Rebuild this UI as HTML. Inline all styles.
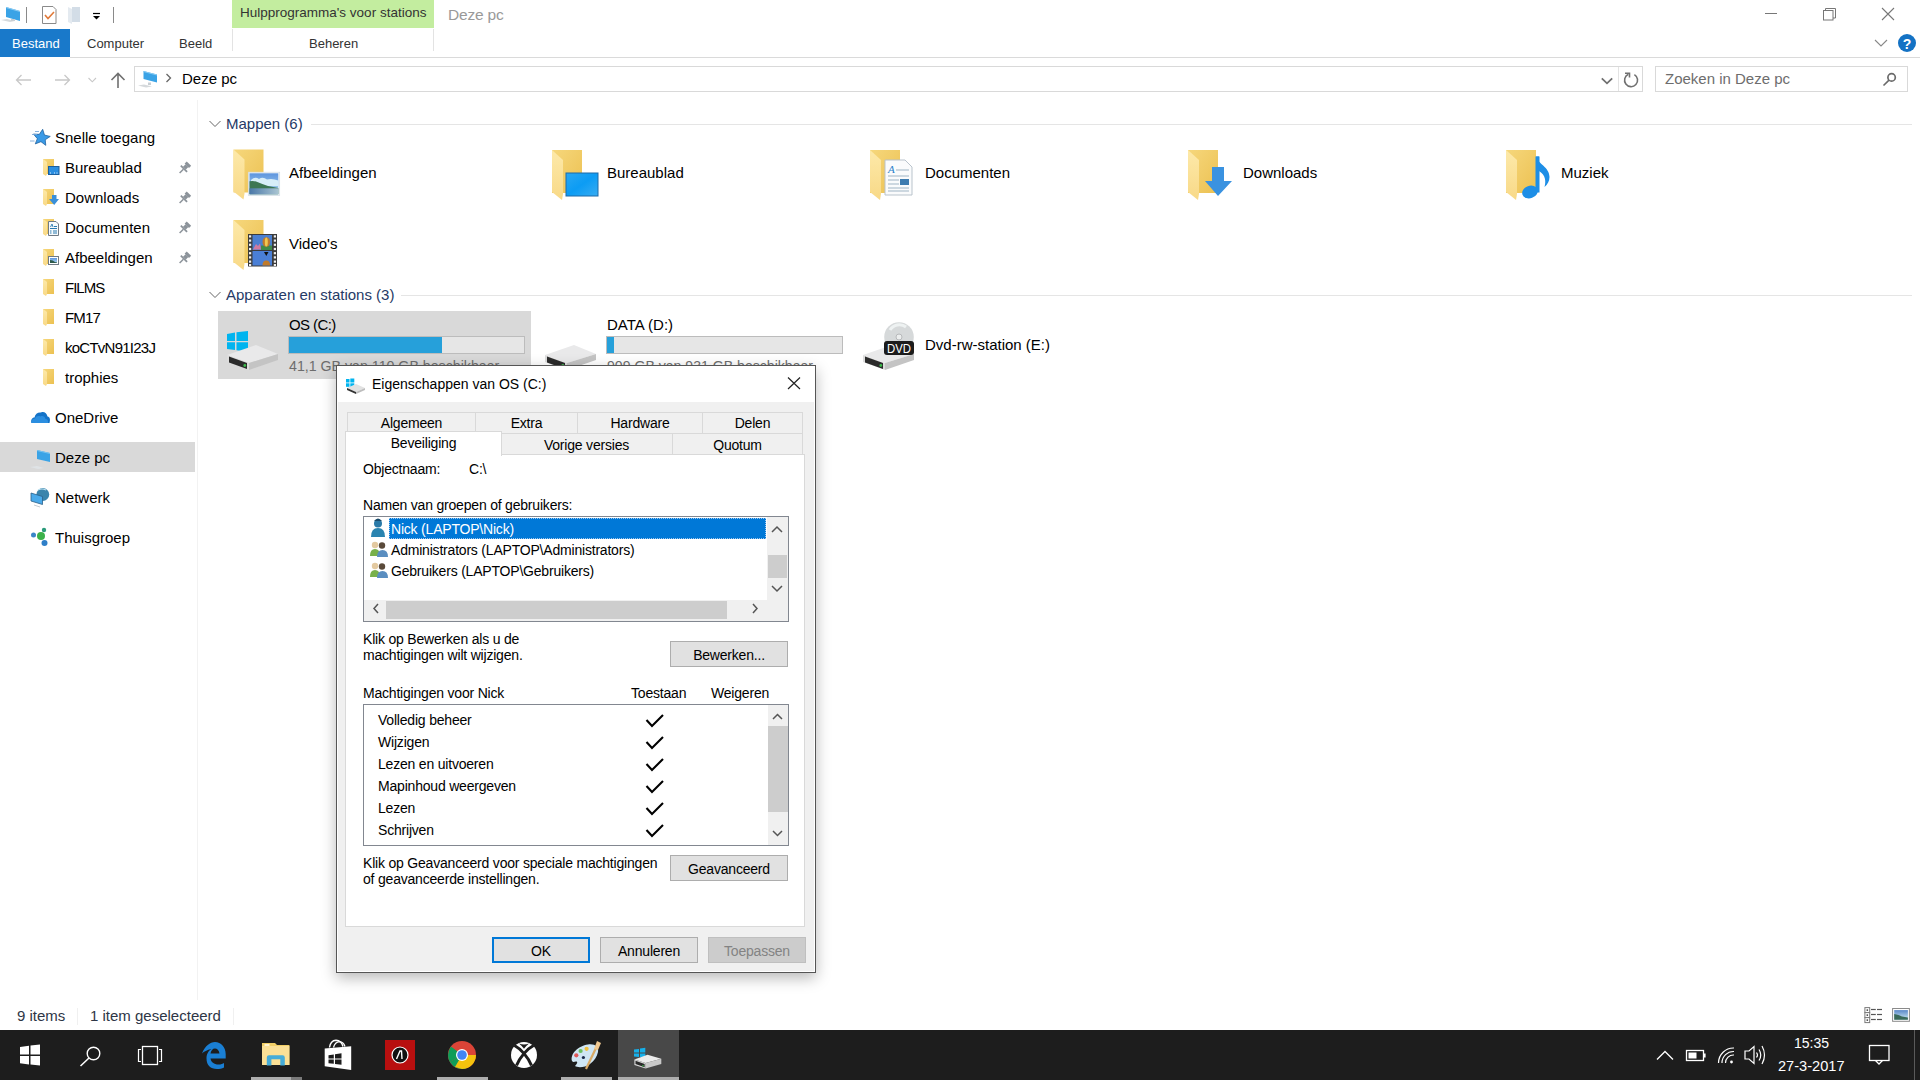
<!DOCTYPE html>
<html><head><meta charset="utf-8">
<style>
*{margin:0;padding:0;box-sizing:border-box}
html,body{width:1920px;height:1080px;overflow:hidden;background:#fff;font-family:"Liberation Sans",sans-serif;color:#000}
.a{position:absolute}
.t{position:absolute;white-space:nowrap;line-height:1}
svg{position:absolute;overflow:visible}
.d{font-size:14px;letter-spacing:-0.2px;color:#000}
.tab{background:#f0f0f0;border:1px solid #d9d9d9;font-size:14px;letter-spacing:-0.2px;text-align:center}
.tab span{position:relative;top:1.5px;line-height:1;white-space:nowrap}
.btn{background:#e1e1e1;border:1px solid #adadad}
</style></head><body>

<!-- ===== TITLE BAR / RIBBON ===== -->
<div class="a" style="left:232px;top:0;width:202px;height:28px;background:#c3ed9f"></div>
<div class="t" style="left:240px;top:6px;font-size:13.5px;color:#333">Hulpprogramma's voor stations</div>
<div class="t" style="left:448px;top:6.9px;font-size:15.5px;letter-spacing:-0.2px;color:#999">Deze pc</div>
<div class="a" style="left:0;top:29px;width:70px;height:28px;background:#1979ca"></div>
<div class="t" style="left:12px;top:37.3px;font-size:13px;color:#fff">Bestand</div>
<div class="t" style="left:87px;top:37.3px;font-size:13px;color:#333">Computer</div>
<div class="t" style="left:179px;top:37.3px;font-size:13px;color:#333">Beeld</div>
<div class="a" style="left:232px;top:29px;width:1px;height:22px;background:#e3e3e3"></div>
<div class="a" style="left:433px;top:29px;width:1px;height:22px;background:#e3e3e3"></div>
<div class="t" style="left:309px;top:37.3px;font-size:13px;color:#333">Beheren</div>
<div class="a" style="left:70px;top:57px;width:1850px;height:1px;background:#dadada"></div>

<!-- ===== TOP ICONS ===== -->
<svg width="1920" height="100" style="left:0;top:0">
<!-- QAT -->
<polygon points="6,7 20,11 20,21 6,17" fill="#3aa3e6"/><polygon points="6,7 20,11 20,12 6,8" fill="#8cccf3"/>
<path d="M1 20 L10 22 L15 21 L7 19Z" fill="#d5d9dc"/><rect x="11" y="19" width="4" height="2" fill="#c8ced3"/>
<line x1="26.5" y1="7" x2="26.5" y2="23" stroke="#8a8a8a"/>
<path d="M42.5 6.5 H53 L56 9.5 V23.5 H42.5Z" fill="#fff" stroke="#8a8a8a"/>
<polyline points="45,15 48,18.5 54,12" fill="none" stroke="#e07a3a" stroke-width="1.6"/>
<path d="M68 7 H79 V22 H80 V7Z" fill="#d6dfe8"/><polygon points="68,7 72,9 72,24 68,22" fill="#e4eaf0"/><rect x="72" y="7" width="8" height="15" fill="#d3dde7"/>
<line x1="93" y1="13.5" x2="100" y2="13.5" stroke="#000" stroke-width="1.2"/><polygon points="93,16 100,16 96.5,19.5" fill="#000"/>
<line x1="113.5" y1="7" x2="113.5" y2="23" stroke="#8a8a8a"/>
<!-- window controls -->
<line x1="1765" y1="13.5" x2="1777" y2="13.5" stroke="#777" stroke-width="1"/>
<rect x="1823.5" y="10.5" width="9.5" height="9.5" fill="none" stroke="#777"/><polyline points="1825.5,10.5 1825.5,8.5 1835.5,8.5 1835.5,18 1833,18" fill="none" stroke="#777"/>
<path d="M1882 8 L1894 20 M1894 8 L1882 20" stroke="#777" stroke-width="1.1"/>
<polyline points="1875,40 1881,46 1887,40" fill="none" stroke="#888" stroke-width="1.1"/>
<circle cx="1907" cy="43" r="9" fill="#1472c4"/><text x="1907" y="49" text-anchor="middle" font-size="14" font-weight="bold" fill="#fff">?</text>
<!-- nav buttons -->
<path d="M16.5 80 H31 M21.5 75 L16.5 80 L21.5 85" fill="none" stroke="#c8c8c8" stroke-width="1.3"/>
<path d="M55 80 H69.5 M64.5 75 L69.5 80 L64.5 85" fill="none" stroke="#c8c8c8" stroke-width="1.3"/>
<polyline points="88.5,78 92.3,81.8 96,78" fill="none" stroke="#c8c8c8" stroke-width="1.1"/>
<path d="M118 73.5 V88 M111.5 80 L118 73.5 L124.5 80" fill="none" stroke="#707070" stroke-width="1.6"/>
<polygon points="143.5,71 157,74.5 157,82.5 143.5,79" fill="#3aa3e6"/><polygon points="143.5,71 157,74.5 157,75.5 143.5,72" fill="#8cccf3"/>
<path d="M138 85.5 L146 87.6 L152 86.5 L144 84.5Z" fill="#d5d9dc"/><rect x="148" y="82.5" width="3" height="2.5" fill="#c8ced3"/>
<polyline points="166.5,74 170.5,78 166.5,82" fill="none" stroke="#666" stroke-width="1.3"/>
<polyline points="1601.8,78.3 1607,83.3 1612.2,78.3" fill="none" stroke="#707070" stroke-width="1.8"/>
<path d="M1634.4 74.6 A6.5 6.5 0 1 1 1628.3 74.3" fill="none" stroke="#707070" stroke-width="1.6"/><polyline points="1625,73.2 1629.5,73.2 1629.5,77.6" fill="none" stroke="#707070" stroke-width="1.6"/>
<circle cx="1891.6" cy="77.4" r="3.7" fill="none" stroke="#6a6a6a" stroke-width="1.7"/><line x1="1889" y1="80.2" x2="1883.5" y2="85.5" stroke="#6a6a6a" stroke-width="1.7"/>
<!-- section chevrons -->
<polyline points="209.5,121 215,126.5 220.5,121" fill="none" stroke="#666" stroke-width="1"/>
<line x1="197.5" y1="100" x2="197.5" y2="100" stroke="#eee"/>
</svg>
<svg width="1920" height="1080" style="left:0;top:0"><polyline points="209.5,292 215,297.5 220.5,292" fill="none" stroke="#666" stroke-width="1"/><line x1="197.5" y1="100" x2="197.5" y2="1000" stroke="#f2f2f2"/></svg>

<!-- ===== ADDRESS BAR ===== -->
<div class="a" style="left:134px;top:66px;width:1509px;height:26px;border:1px solid #d9d9d9"></div>
<div class="a" style="left:1618px;top:67px;width:1px;height:24px;background:#e3e3e3"></div>
<div class="t" style="left:182px;top:71px;font-size:15px;color:#000">Deze pc</div>
<div class="a" style="left:1655px;top:66px;width:253px;height:26px;border:1px solid #d9d9d9"></div>
<div class="t" style="left:1665px;top:71px;font-size:15px;color:#6d6d6d">Zoeken in Deze pc</div>

<!-- ===== NAV PANE ===== -->
<div class="a" style="left:0;top:442px;width:195px;height:30px;background:#d9d9d9"></div>
<div class="t" style="left:55px;top:130px;font-size:15px">Snelle toegang</div>
<div class="t" style="left:65px;top:160px;font-size:15px">Bureaublad</div>
<div class="t" style="left:65px;top:190px;font-size:15px">Downloads</div>
<div class="t" style="left:65px;top:220px;font-size:15px">Documenten</div>
<div class="t" style="left:65px;top:250px;font-size:15px">Afbeeldingen</div>
<div class="t" style="left:65px;top:280px;font-size:15px;letter-spacing:-1px">FILMS</div>
<div class="t" style="left:65px;top:310px;font-size:15px;letter-spacing:-0.8px">FM17</div>
<div class="t" style="left:65px;top:340px;font-size:15px;letter-spacing:-0.75px">koCTvN91I23J</div>
<div class="t" style="left:65px;top:370px;font-size:15px">trophies</div>
<div class="t" style="left:55px;top:410px;font-size:15px">OneDrive</div>
<div class="t" style="left:55px;top:450px;font-size:15px">Deze pc</div>
<div class="t" style="left:55px;top:490px;font-size:15px">Netwerk</div>
<div class="t" style="left:55px;top:530px;font-size:15px">Thuisgroep</div>

<!-- ===== CONTENT ===== -->
<div class="t" style="left:226px;top:116px;font-size:15px;color:#263a66">Mappen (6)</div>
<div class="a" style="left:311px;top:124px;width:1601px;height:1px;background:#e5e5e5"></div>
<div class="t" style="left:289px;top:165px;font-size:15px">Afbeeldingen</div>
<div class="t" style="left:607px;top:165px;font-size:15px">Bureaublad</div>
<div class="t" style="left:925px;top:165px;font-size:15px">Documenten</div>
<div class="t" style="left:1243px;top:165px;font-size:15px">Downloads</div>
<div class="t" style="left:1561px;top:165px;font-size:15px">Muziek</div>
<div class="t" style="left:289px;top:236px;font-size:15px">Video's</div>

<div class="t" style="left:226px;top:287px;font-size:15px;color:#263a66">Apparaten en stations (3)</div>
<div class="a" style="left:401px;top:295px;width:1511px;height:1px;background:#e5e5e5"></div>
<div class="a" style="left:218px;top:311px;width:313px;height:68px;background:#d9d9d9"></div>
<div class="t" style="left:289px;top:317px;font-size:15px;letter-spacing:-0.6px">OS (C:)</div>
<div class="a" style="left:288px;top:336px;width:237px;height:18px;background:#e6e6e6;border:1px solid #bcbcbc"></div>
<div class="a" style="left:289px;top:337px;width:153px;height:16px;background:#26a0da"></div>
<div class="t" style="left:289px;top:358.5px;font-size:14.2px;color:#6d6d6d">41,1 GB van 110 GB beschikbaar</div>
<div class="t" style="left:607px;top:317px;font-size:15px">DATA (D:)</div>
<div class="a" style="left:606px;top:336px;width:237px;height:18px;background:#e6e6e6;border:1px solid #bcbcbc"></div>
<div class="a" style="left:607px;top:337px;width:7px;height:16px;background:#26a0da"></div>
<div class="t" style="left:607px;top:358.5px;font-size:14.1px;color:#6d6d6d">909 GB van 931 GB beschikbaar</div>
<div class="t" style="left:925px;top:337px;font-size:15px">Dvd-rw-station (E:)</div>

<!-- ===== EXPLORER ICONS ===== -->
<svg width="1920" height="1080" style="left:0;top:0">
<defs>
<linearGradient id="gB" x1="0" y1="0" x2="1" y2="1"><stop offset="0" stop-color="#f6d77c"/><stop offset="1" stop-color="#ecc152"/></linearGradient>
<linearGradient id="gF" x1="0" y1="0" x2="0" y2="1"><stop offset="0" stop-color="#fde9a9"/><stop offset="1" stop-color="#f8d987"/></linearGradient>
<linearGradient id="gDt" x1="0" y1="0" x2="1" y2="1"><stop offset="0" stop-color="#2aa7f2"/><stop offset=".5" stop-color="#0c9cf4"/><stop offset="1" stop-color="#38acf2"/></linearGradient>
<linearGradient id="gSky" x1="0" y1="0" x2="0" y2="1"><stop offset="0" stop-color="#5d95de"/><stop offset="1" stop-color="#b4daf2"/></linearGradient>
<linearGradient id="gWat" x1="0" y1="0" x2="1" y2="0"><stop offset="0" stop-color="#4a78a8"/><stop offset="1" stop-color="#a9c4d2"/></linearGradient>
<symbol id="fold" overflow="visible"><rect x="0" y="0" width="30" height="43" fill="url(#gB)"/><polygon points="0,0 11,10 11,44 10,50 0,42" fill="url(#gF)"/></symbol>
<symbol id="sfold" overflow="visible"><rect x="0" y="0" width="11" height="15" fill="url(#gB)"/><polygon points="0,0 4,3 4,15 3,17 0,15" fill="url(#gF)"/></symbol>
<symbol id="drv" overflow="visible">
 <polygon points="0,24 29,14 51,23 22,32" fill="#e9e9ea"/>
 <polygon points="22,32 51,23 51,29 22,39" fill="#c4c4c4"/>
 <polygon points="0,24 22,32 22,39 0,31" fill="#dcdcdc"/>
 <polygon points="2,25.5 20,32 20,38 2,31.5" fill="#2b2b2b"/>
 <circle cx="17.8" cy="34.5" r="1.4" fill="#3bbb4b"/>
</symbol>
</defs>
<!-- big folders -->
<use href="#fold" x="233.5" y="149.5"/>
<g><rect x="248.3" y="172.2" width="31.4" height="23.4" fill="#f4f8fb" stroke="#cfdbe4" stroke-width=".7"/><rect x="249.5" y="173.3" width="28.8" height="21" fill="url(#gSky)"/><path d="M251 180 Q255 176 259 179 Q263 176.5 267 179.5 Q272 178 278.3 180.5 V186 H251Z" fill="#d8eef8"/><path d="M249.5 181.3 Q254 180.3 258 182.3 Q263 184.5 268 186 L278.3 188 V194.3 H249.5Z" fill="#3d7652"/><rect x="249.5" y="188.3" width="28.8" height="6" fill="url(#gWat)"/></g>
<use href="#fold" x="233.5" y="220"/>
<g><rect x="248" y="234" width="29" height="32.5" fill="#3c3c3c"/><rect x="252.5" y="235" width="19.5" height="15" fill="#4b7fd0"/><rect x="252.5" y="251" width="19.5" height="14.5" fill="#4a7fd6"/><rect x="261" y="245.5" width="11" height="4.5" fill="#3f8a4a"/><path d="M253 249.5 L256 244 L258 246 L260 243.5 L261 249.5Z" fill="#d07aa0"/><ellipse cx="266.3" cy="242" rx="3.8" ry="4.8" fill="#c07a2a"/><ellipse cx="266.3" cy="242" rx="1.5" ry="4.5" fill="#f0c850"/><path d="M262.5 265.5 Q262.5 260.5 266.3 260.5 Q270.1 260.5 270.1 265.5Z" fill="#c07a2a"/><path d="M264 252 L268.5 252 L266.3 256Z" fill="#111"/><g fill="#f2f2f2"><rect x="249" y="235.3" width="2.2" height="2.2"/><rect x="249" y="239.5" width="2.2" height="2.2"/><rect x="249" y="243.7" width="2.2" height="2.2"/><rect x="249" y="247.9" width="2.2" height="2.2"/><rect x="249" y="252.1" width="2.2" height="2.2"/><rect x="249" y="256.3" width="2.2" height="2.2"/><rect x="249" y="260.5" width="2.2" height="2.2"/><rect x="249" y="264" width="2.2" height="2"/><rect x="273.8" y="235.3" width="2.2" height="2.2"/><rect x="273.8" y="239.5" width="2.2" height="2.2"/><rect x="273.8" y="243.7" width="2.2" height="2.2"/><rect x="273.8" y="247.9" width="2.2" height="2.2"/><rect x="273.8" y="252.1" width="2.2" height="2.2"/><rect x="273.8" y="256.3" width="2.2" height="2.2"/><rect x="273.8" y="260.5" width="2.2" height="2.2"/><rect x="273.8" y="264" width="2.2" height="2"/></g></g>
<use href="#fold" x="552" y="150"/>
<rect x="566" y="173" width="32" height="23" fill="url(#gDt)" stroke="#1c6aa8" stroke-width="1"/>
<use href="#fold" x="870" y="150"/>
<g><path d="M885 160 H905 L912 167 V195 H885Z" fill="#fafbfc" stroke="#b9c3cc" stroke-width="1"/><text x="888" y="173" font-family="Liberation Serif" font-style="italic" font-size="11" fill="#2a7fc9">A</text><g stroke="#9fb4c4" stroke-width="1"><line x1="896" y1="170" x2="909" y2="170"/><line x1="888" y1="176" x2="909" y2="176"/><line x1="888" y1="180" x2="899" y2="180"/><line x1="888" y1="184" x2="899" y2="184"/><line x1="888" y1="188" x2="909" y2="188"/><line x1="888" y1="191" x2="909" y2="191"/></g><rect x="900" y="179" width="9" height="6" fill="#3e7cb0"/></g>
<use href="#fold" x="1188" y="150"/>
<polygon points="1212,167 1224,167 1224,181 1232,181 1218,196 1205,181 1212,181" fill="#3a92e0"/>
<use href="#fold" x="1506" y="150"/>
<g fill="#1d8ee6"><ellipse cx="1530" cy="192" rx="8" ry="6.2" transform="rotate(-20 1530 192)"/><rect x="1535.5" y="156.5" width="4" height="36"/><path d="M1536 156.5 C1538 164 1549.5 167 1549.5 177 C1549.5 181 1547.5 184.5 1544.5 187 C1546 182 1546 175 1539 171 V156.5Z"/></g>

<!-- nav icons -->
<g fill="#3a9ae6" stroke="#1d5e9a" stroke-width=".7" transform="translate(0.5 -0.8) rotate(8 41 138.5)"><polygon points="41,130 43.6,135.5 49.5,136 45,140 46.3,145.5 41,142.5 35.7,145.5 37,140 32.5,136 38.4,135.5"/></g>
<g stroke="#7aa8d8" stroke-width=".9"><line x1="35" y1="131.5" x2="39" y2="131.5"/><line x1="32" y1="134.5" x2="37" y2="134.5"/><line x1="30" y1="141" x2="34.5" y2="141"/></g>
<use href="#sfold" x="43" y="159"/><rect x="48.5" y="166.5" width="10.5" height="8" fill="#2b8ee0" stroke="#1b5f9e" stroke-width="1"/><g fill="#dff0ff"><rect x="50" y="172.5" width="1" height="1"/><rect x="54" y="172.5" width="1" height="1"/><rect x="56.5" y="172.5" width="1" height="1"/></g>
<use href="#sfold" x="43" y="189"/><polygon points="52,195 56.5,195 56.5,199 59,199 54.2,205 49,199 52,199" fill="#3a8fd8"/>
<use href="#sfold" x="43" y="219"/><path d="M48.5 221.5 H56 L58.5 224 V235.5 H48.5Z" fill="#f6fafc" stroke="#6f7a84" stroke-width="1"/><path d="M50.5 227 L52 224 L53 227" stroke="#2a7ab0" stroke-width=".9" fill="none"/><g stroke="#2a7ab0" stroke-width="1"><line x1="54" y1="226.5" x2="57" y2="226.5"/><line x1="50" y1="228.5" x2="57" y2="228.5"/><line x1="50" y1="231" x2="51.5" y2="231"/><line x1="53" y1="231" x2="57" y2="231"/><line x1="50" y1="233" x2="51.5" y2="233"/><line x1="53" y1="233" x2="57" y2="233"/></g>
<use href="#sfold" x="43" y="249"/><rect x="48.5" y="256.5" width="10" height="8" fill="#fff" stroke="#6f7a84" stroke-width="1"/><rect x="50" y="258" width="7" height="5" fill="url(#gSky)"/><path d="M50 260 Q53 260 55 262 L57 262.5 V263 H50Z" fill="#2e5a4a"/>
<use href="#sfold" x="43" y="279"/>
<use href="#sfold" x="43" y="309"/>
<use href="#sfold" x="43" y="339"/>
<use href="#sfold" x="43" y="369"/>




<g transform="translate(183.3 169.3) rotate(-45)" fill="#8c939a"><rect x="-5.2" y="-0.75" width="5.4" height="1.5"/><rect x="0" y="-4.4" width="1.8" height="8.8"/><rect x="1.6" y="-2" width="3.6" height="4"/><rect x="5" y="-3.1" width="3" height="6.2"/></g><g transform="translate(183.3 199.3) rotate(-45)" fill="#8c939a"><rect x="-5.2" y="-0.75" width="5.4" height="1.5"/><rect x="0" y="-4.4" width="1.8" height="8.8"/><rect x="1.6" y="-2" width="3.6" height="4"/><rect x="5" y="-3.1" width="3" height="6.2"/></g><g transform="translate(183.3 229.3) rotate(-45)" fill="#8c939a"><rect x="-5.2" y="-0.75" width="5.4" height="1.5"/><rect x="0" y="-4.4" width="1.8" height="8.8"/><rect x="1.6" y="-2" width="3.6" height="4"/><rect x="5" y="-3.1" width="3" height="6.2"/></g><g transform="translate(183.3 259.3) rotate(-45)" fill="#8c939a"><rect x="-5.2" y="-0.75" width="5.4" height="1.5"/><rect x="0" y="-4.4" width="1.8" height="8.8"/><rect x="1.6" y="-2" width="3.6" height="4"/><rect x="5" y="-3.1" width="3" height="6.2"/></g>
<!-- onedrive -->
<path d="M31.5 423 C30.5 420 32 417.5 34.5 417.5 C35 414 38 412 41 412.5 C43.5 411 47 413 47.5 416.5 C50 417 50.5 419.5 49.5 423Z" fill="#1473c8"/><path d="M31.5 423 C31 420.5 32.5 418.5 35 418.5 C36 416 38.5 415.5 40.5 416.5 C42.5 415.5 45 416.5 45.5 419 C47.5 419 48.5 421 48 423Z" fill="#2b8ee0"/>
<!-- deze pc -->
<polygon points="37,450 50,453 50,462 37,459" fill="#3aa3e6"/><polygon points="37,450 50,453 50,454 37,451" fill="#7ac4f0"/><path d="M30 467 L38 469 L44 468 L37 466Z" fill="#dfe3e6"/>
<!-- netwerk -->
<circle cx="42.8" cy="494.5" r="6.4" fill="#3a84ac"/><path d="M38 490 Q42 488 46 490" stroke="#bfe3f2" stroke-width="1.2" fill="none"/><polygon points="31,493 42.5,496.5 42.5,504.5 31,501" fill="#4aaaea" stroke="#2b5f88" stroke-width=".8"/><path d="M34 505 L40 507" stroke="#c5ccd2" stroke-width="1"/>
<!-- thuisgroep -->
<circle cx="33.5" cy="535" r="2.5" fill="#3a86c8"/><circle cx="41" cy="536" r="4" fill="#3cb14a"/><circle cx="44" cy="530" r="2.2" fill="#2a9a7a"/><circle cx="44.5" cy="543" r="3" fill="#2e7fc8"/>

<!-- drives -->
<g><polygon points="227,334 235,332.5 235,341 227,341" fill="#00b4ef"/><polygon points="236.5,332.3 248,331 248,341 236.5,341" fill="#00b4ef"/><polygon points="227,342.3 235,342.3 235,350 227,349" fill="#00b4ef"/><polygon points="236.5,342.3 248,342.3 248,351.7 236.5,350.3" fill="#00b4ef"/></g>
<use href="#drv" x="227" y="331"/>
<use href="#drv" x="545" y="331"/>
<g><circle cx="899" cy="337" r="14.8" fill="#d6d9da"/><path d="M890 330 A11 11 0 0 1 906 327" stroke="#eef2f2" stroke-width="3" fill="none"/><circle cx="899" cy="337" r="3" fill="#eceeee" stroke="#b7b9bb"/></g>
<use href="#drv" x="863" y="331"/>
<rect x="884" y="341" width="30" height="14" rx="3" fill="#1c1c1c"/><text x="887" y="353" textLength="24" lengthAdjust="spacingAndGlyphs" font-size="13.5" fill="#fff">DVD</text>
</svg>

<!-- ===== STATUS BAR ===== -->
<div class="t" style="left:17px;top:1008px;font-size:15px;color:#2e3646">9 items</div>
<div class="a" style="left:77px;top:1008px;width:1px;height:17px;background:#f0f0f0"></div>
<div class="a" style="left:233px;top:1008px;width:1px;height:17px;background:#f0f0f0"></div>
<div class="t" style="left:90px;top:1008px;font-size:15px;color:#2e3646">1 item geselecteerd</div>

<!-- ===== DIALOG ===== -->
<div id="dlg" class="a" style="left:336px;top:365px;width:480px;height:608px;background:#f0f0f0;border:1px solid #555;box-shadow:inset 0 0 0 1px #fff,0 5px 14px rgba(0,0,0,.28)"></div>
<div class="a" style="left:337px;top:366px;width:478px;height:36px;background:#fff"></div>
<div class="t" style="left:372px;top:377px;font-size:14px;color:#000">Eigenschappen van OS (C:)</div>
<!-- tabs row1 -->
<div class="a tab" style="left:347px;top:412px;width:129px;height:22px"><span>Algemeen</span></div>
<div class="a tab" style="left:475px;top:412px;width:103px;height:22px"><span>Extra</span></div>
<div class="a tab" style="left:577px;top:412px;width:126px;height:22px"><span>Hardware</span></div>
<div class="a tab" style="left:702px;top:412px;width:101px;height:22px"><span>Delen</span></div>
<!-- tabs row2 -->
<div class="a tab" style="left:500px;top:433px;width:173px;height:22px"><span style="top:3px">Vorige versies</span></div>
<div class="a tab" style="left:672px;top:433px;width:131px;height:22px"><span style="top:3px">Quotum</span></div>
<!-- panel -->
<div class="a" style="left:345px;top:454px;width:460px;height:473px;background:#fff;border:1px solid #d9d9d9"></div>
<div class="a" style="left:345px;top:431px;width:157px;height:25px;background:#fff;border:1px solid #d9d9d9;border-bottom:none"></div>
<div class="t d" style="left:345px;top:435.5px;width:157px;text-align:center">Beveiliging</div>

<div class="t d" style="left:363px;top:461.5px">Objectnaam:</div>
<div class="t d" style="left:469px;top:461.5px">C:\</div>
<div class="t d" style="left:363px;top:497.5px">Namen van groepen of gebruikers:</div>

<!-- users listbox -->
<div class="a" style="left:363px;top:516px;width:426px;height:106px;background:#fff;border:1px solid #828790"></div>
<div class="a" style="left:389px;top:518px;width:377px;height:21px;background:#0078d7;outline:1px dotted #9cc7ef;outline-offset:-1px"></div>
<div class="t d" style="left:391px;top:521.5px;color:#fff">Nick (LAPTOP\Nick)</div>
<div class="t d" style="left:391px;top:542.5px">Administrators (LAPTOP\Administrators)</div>
<div class="t d" style="left:391px;top:564px">Gebruikers (LAPTOP\Gebruikers)</div>
<div class="a" style="left:767px;top:517px;width:21px;height:104px;background:#f0f0f0"></div>
<div class="a" style="left:768px;top:555px;width:19px;height:23px;background:#cdcdcd"></div>
<div class="a" style="left:364px;top:600px;width:403px;height:21px;background:#f0f0f0"></div>
<div class="a" style="left:386px;top:601px;width:341px;height:18px;background:#cdcdcd"></div>

<div class="t d" style="left:363px;top:631.5px">Klik op Bewerken als u de</div>
<div class="t d" style="left:363px;top:647.5px">machtigingen wilt wijzigen.</div>
<div class="a btn" style="left:670px;top:641px;width:118px;height:26px"></div>
<div class="t d" style="left:670px;top:647.5px;width:118px;text-align:center">Bewerken...</div>

<div class="t d" style="left:363px;top:685.5px">Machtigingen voor Nick</div>
<div class="t d" style="left:631px;top:685.5px">Toestaan</div>
<div class="t d" style="left:711px;top:685.5px">Weigeren</div>

<!-- perms listbox -->
<div class="a" style="left:363px;top:704px;width:426px;height:142px;background:#fff;border:1px solid #828790"></div>
<div class="a" style="left:768px;top:705px;width:20px;height:140px;background:#f0f0f0"></div>
<div class="a" style="left:768px;top:726px;width:20px;height:86px;background:#cdcdcd"></div>
<div class="t d" style="left:378px;top:712.9px">Volledig beheer</div>
<div class="t d" style="left:378px;top:734.6px">Wijzigen</div>
<div class="t d" style="left:378px;top:756.9px">Lezen en uitvoeren</div>
<div class="t d" style="left:378px;top:778.6px">Mapinhoud weergeven</div>
<div class="t d" style="left:378px;top:800.5px">Lezen</div>
<div class="t d" style="left:378px;top:822.5px">Schrijven</div>

<div class="t d" style="left:363px;top:856.3px">Klik op Geavanceerd voor speciale machtigingen</div>
<div class="t d" style="left:363px;top:872.2px">of geavanceerde instellingen.</div>
<div class="a btn" style="left:670px;top:855px;width:118px;height:26px"></div>
<div class="t d" style="left:670px;top:861.5px;width:118px;text-align:center">Geavanceerd</div>

<div class="a btn" style="left:492px;top:937px;width:98px;height:26px;border:2px solid #0078d7"></div>
<div class="t d" style="left:492px;top:943.6px;width:98px;text-align:center">OK</div>
<div class="a btn" style="left:600px;top:937px;width:98px;height:26px"></div>
<div class="t d" style="left:600px;top:943.6px;width:98px;text-align:center">Annuleren</div>
<div class="a btn" style="left:708px;top:937px;width:98px;height:26px;background:#ccc;border-color:#bfbfbf"></div>
<div class="t d" style="left:708px;top:943.6px;width:98px;text-align:center;color:#838383">Toepassen</div>

<!-- dialog icons -->
<svg width="1920" height="1080" style="left:0;top:0">
<g fill="#00b4ef"><rect x="346" y="379" width="3.5" height="3.5"/><rect x="350.3" y="378.5" width="4" height="4"/><rect x="346" y="383.3" width="3.5" height="3.5"/><rect x="350.3" y="383.3" width="4" height="4"/></g>
<polygon points="347,388 356,384 365,388 356,392" fill="#e2e2e2"/><polygon points="356,392 365,388 365,390 356,394" fill="#bdbdbd"/><polygon points="347,388 356,392 356,394 347,390" fill="#333"/>
<path d="M788 377.5 L800 389 M800 377.5 L788 389" stroke="#222" stroke-width="1.2"/>
<!-- users -->
<g><circle cx="378" cy="523.5" r="4" fill="#2a7aa8"/><path d="M371 537 Q371 528 378 528 Q385 528 385 537Z" fill="#2a84b0"/><path d="M374 521 Q378 516 382 521Z" fill="#1a4a6a"/></g>
<g><circle cx="375" cy="545" r="3.2" fill="#e3c9a0"/><path d="M370 556 Q370 549 375 549 Q380 549 380 556Z" fill="#78b04a"/><circle cx="382" cy="545.5" r="3.2" fill="#5a4a3a"/><path d="M377 557 Q377 550 382.5 550 Q388 550 388 557Z" fill="#5a8ec0"/></g>
<g><circle cx="375" cy="566" r="3.2" fill="#e3c9a0"/><path d="M370 577 Q370 570 375 570 Q380 570 380 577Z" fill="#78b04a"/><circle cx="382" cy="566.5" r="3.2" fill="#5a4a3a"/><path d="M377 578 Q377 571 382.5 571 Q388 571 388 578Z" fill="#5a8ec0"/></g>
<!-- scroll arrows -->
<g fill="none" stroke="#555" stroke-width="1.5">
<polyline points="772,532 777,527 782,532"/><polyline points="772,586 777,591 782,586"/>
<polyline points="378,604 374,608.5 378,613"/><polyline points="753,604 757,608.5 753,613"/>
<polyline points="773,719 777.5,714.5 782,719"/><polyline points="773,831 777.5,835.5 782,831"/>
</g>
<!-- checks -->
<g fill="none" stroke="#000" stroke-width="2.1">
<polyline points="646.5,720 652,726 663,715"/>
<polyline points="646.5,742 652,748 663,737"/>
<polyline points="646.5,764 652,770 663,759"/>
<polyline points="646.5,786 652,792 663,781"/>
<polyline points="646.5,808 652,814 663,803"/>
<polyline points="646.5,830 652,836 663,825"/>
</g>
</svg>

<!-- ===== TASKBAR ===== -->
<div class="a" style="left:0;top:1030px;width:1920px;height:50px;background:#1d1d1d"></div>
<div class="a" style="left:618px;top:1030px;width:61px;height:50px;background:#484848"></div>
<div class="a" style="left:251px;top:1077px;width:40px;height:3px;background:#adadad"></div>
<div class="a" style="left:291px;top:1077px;width:11px;height:3px;background:#7a7a7a"></div>
<div class="a" style="left:437px;top:1077px;width:51px;height:3px;background:#adadad"></div>
<div class="a" style="left:561px;top:1077px;width:51px;height:3px;background:#adadad"></div>
<div class="a" style="left:618px;top:1077px;width:61px;height:3px;background:#adadad"></div>
<svg width="1920" height="50" style="left:0;top:1030px">
<!-- start -->
<g fill="#fff"><polygon points="20,17 29,15.8 29,24.5 20,24.5"/><polygon points="30.5,15.6 40,14.5 40,24.5 30.5,24.5"/><polygon points="20,26 29,26 29,34.5 20,33.3"/><polygon points="30.5,26 40,26 40,35.5 30.5,34.4"/></g>
<!-- search -->
<circle cx="93.5" cy="23.5" r="6.3" fill="none" stroke="#fff" stroke-width="1.4"/><line x1="89" y1="28" x2="80.5" y2="36" stroke="#fff" stroke-width="1.6"/>
<!-- task view -->
<rect x="142.5" y="16.5" width="15" height="18" fill="none" stroke="#fff" stroke-width="1.3"/><polyline points="141,19.5 138.5,19.5 138.5,31.5 141,31.5" fill="none" stroke="#fff" stroke-width="1.2"/><polyline points="159,19.5 161.5,19.5 161.5,31.5 159,31.5" fill="none" stroke="#fff" stroke-width="1.2"/>
<!-- edge -->
<path fill-rule="evenodd" d="M202 23.5 C205 16 210 12 215 12 C221 12 225.7 17 225.7 24 V28.5 H210.5 C211 32 214 34.5 218.5 34.5 C221 34.5 223 33.8 224 33 V37.5 C222 38.5 219.5 39 217 39 C210.5 39 206.5 35 206.5 28.5 C206.5 24 208.5 20.5 211.5 19 C207 20 204 21.5 202 23.5Z M210.5 23.5 H219.5 C219 20 217 18.5 215 18.5 C212.5 18.5 211 20.5 210.5 23.5Z" fill="#1a7fd4"/>
<!-- explorer -->
<path d="M262 13 H275 L277 15 H289.4 V35 H262Z" fill="#f2cf66"/><rect x="262" y="16" width="27.4" height="19" fill="#fbe096"/><rect x="264.5" y="14" width="5" height="2" fill="#fff3d0"/>
<path d="M266.8 35.6 V27.6 Q266.8 25.3 269 25.3 H282.6 Q284.8 25.3 284.8 27.6 V35.6 H280.3 V29.2 H271.4 V35.6Z" fill="#46acd8"/>
<!-- store -->
<path d="M329.5 17.5 Q330.5 10.5 336 10.2 Q341.5 10.5 343 16.5" fill="none" stroke="#fff" stroke-width="1.5"/><path d="M333.5 17.5 Q335 12 339.5 11.7 Q343.5 12 345 16.5" fill="none" stroke="#fff" stroke-width="1.3"/>
<polygon points="324.7,18.5 351.2,16.3 351.2,40 324.7,36.3" fill="#fff"/>
<g fill="#1d1d1d"><polygon points="328.5,25.2 333.8,24.4 333.8,28.6 328.5,28.6"/><polygon points="335,24.2 341.5,23.2 341.5,28.6 335,28.6"/><polygon points="328.5,29.6 333.8,29.6 333.8,33.7 328.5,33.2"/><polygon points="335,29.6 341.5,29.6 341.5,34.7 335,34"/></g>
<!-- red app -->
<rect x="385" y="10" width="30" height="30" fill="#b80f0f"/><circle cx="400" cy="25" r="8" fill="#111" stroke="#fff" stroke-width="1.2"/><path d="M396.5 29 L400 21 L401.5 21 L402 29" fill="none" stroke="#fff" stroke-width="1.4"/>
<!-- chrome -->
<circle cx="462" cy="25" r="14" fill="#db4437"/><path d="M462 25 L449.9 32 A14 14 0 0 0 466 38.4Z" fill="#0f9d58"/><path d="M462 25 L449.9 32 A14 14 0 0 1 448 25 A14 14 0 0 1 451 16.5Z" fill="#0f9d58"/><path d="M462 25 L476 25 A14 14 0 0 1 462 39 L 455 37 Z" fill="#f4c20d"/><circle cx="462" cy="25" r="6" fill="#fff"/><circle cx="462" cy="25" r="4.8" fill="#4285f4"/>
<!-- xbox -->
<circle cx="524" cy="25" r="13" fill="#fff"/><path d="M514.5 15.5 C521 19 528 27 531.5 35.5 M533.5 15.5 C527 19 520 27 516.5 35.5" fill="none" stroke="#1d1d1d" stroke-width="3"/><path d="M519 13.5 Q524 15.5 529 13.5 Q524 18 524 19 Q524 18 519 13.5Z" fill="#1d1d1d"/>
<!-- paint -->
<path d="M572 31 C570 24 578 16 588 14.5 C595 13.5 599 17 598 22 C597 27 594 31 590 34 C585 37.5 578 38 575 36 C577 34 578 32 576.5 31.5 C575 31 573.5 33 572 31Z" fill="#cfe6f4"/>
<circle cx="576.3" cy="25.3" r="2.1" fill="#e05a5a"/><circle cx="580.6" cy="21" r="2.1" fill="#6cc060"/><circle cx="586.6" cy="18.8" r="2.1" fill="#f0c040"/><circle cx="583.4" cy="27.5" r="1.6" fill="#1a2a4a"/>
<line x1="586" y1="39" x2="596" y2="18" stroke="#d9aa66" stroke-width="2.2"/><path d="M594 19 L597 11 L601 13 L598 20Z" fill="#f0c890"/>
<!-- drive (active) -->
<g fill="#16b0ea"><polygon points="634,19.5 639,19 639,22.6 634,22.6"/><polygon points="640,18.6 645.3,17.8 645.3,22.6 640,22.6"/><polygon points="634,23.4 639,23.4 639,27 634,26.5"/><polygon points="640,23.4 645.3,23.4 645.3,27.6 640,27.1"/></g>
<polygon points="634.4,29.4 647.5,24.7 661.3,28.8 645.6,33" fill="#ececec"/><polygon points="645.6,33 661.3,28.8 661.3,34 645.6,38.5" fill="#c9c9c9"/><polygon points="634.4,29.4 645.6,33 645.6,38.5 634.4,35" fill="#d8d8d8"/><polygon points="635.5,30.8 644.6,34 644.6,37.3 635.5,34" fill="#2a2a2a"/><circle cx="643" cy="35.8" r=".8" fill="#3bbb4b"/>
<!-- tray -->
<polyline points="1657,29.5 1665,21.5 1673,29.5" fill="none" stroke="#fff" stroke-width="1.3"/>
<rect x="1686.5" y="20.5" width="17" height="10" fill="none" stroke="#fff" stroke-width="1.3"/><rect x="1704" y="23.5" width="1.6" height="4" fill="#fff"/><rect x="1688.5" y="22.5" width="8" height="6" fill="#fff"/>
<g fill="none" stroke="#fff" stroke-width="1.2"><path d="M1718.5 33 A15 15 0 0 1 1734 18"/><path d="M1722 33 A11.5 11.5 0 0 1 1734 21.5"/><path d="M1725.5 33 A8 8 0 0 1 1734 25"/></g><circle cx="1731.5" cy="32" r="1.4" fill="#fff"/>
<path d="M1745 21 H1749 L1754 16.5 V33.5 L1749 29 H1745Z" fill="none" stroke="#fff" stroke-width="1.2"/>
<g fill="none" stroke="#fff" stroke-width="1.2"><path d="M1756.5 22.5 Q1758.5 25 1756.5 27.5"/><path d="M1759 19.5 Q1762.5 25 1759 30.5"/><path d="M1762 16 Q1767 25 1762 34"/></g>
<rect x="1869.5" y="15.5" width="19.5" height="15" fill="none" stroke="#fff" stroke-width="1.3"/><polyline points="1875.5,30.5 1879,34 1882.5,30.5" fill="none" stroke="#fff" stroke-width="1.3"/>
<line x1="1914.5" y1="0" x2="1914.5" y2="50" stroke="#5a5a5a"/>
</svg>
<div class="t" style="left:1794px;top:1036px;font-size:14px;color:#fff">15:35</div>
<div class="t" style="left:1778px;top:1059px;font-size:14.6px;color:#fff">27-3-2017</div>
<!-- view icons -->
<svg width="60" height="30" style="left:1860px;top:1000px">
<g fill="#fff" stroke="#7a7a7a" stroke-width="1"><rect x="4.9" y="7.6" width="4.8" height="5"/><rect x="4.9" y="12.6" width="4.8" height="5"/><rect x="4.9" y="17.6" width="4.8" height="5"/></g>
<g fill="#444"><circle cx="7.3" cy="10.1" r=".9"/><circle cx="7.3" cy="15.1" r=".9"/><circle cx="7.3" cy="20.1" r=".9"/></g>
<g stroke="#555" stroke-width="1.2"><line x1="11" y1="9.5" x2="15.8" y2="9.5"/><line x1="17" y1="9.5" x2="22" y2="9.5"/><line x1="11" y1="14.5" x2="15.8" y2="14.5"/><line x1="17" y1="14.5" x2="22" y2="14.5"/><line x1="11" y1="19.5" x2="15.8" y2="19.5"/><line x1="17" y1="19.5" x2="22" y2="19.5"/></g>
<rect x="32.6" y="8.5" width="16.8" height="12.8" fill="#fff" stroke="#8a8a8a" stroke-width="1"/>
<rect x="34.2" y="10.1" width="13.7" height="9.7" fill="url(#gSky2)"/><path d="M34.2 14 Q39 14.5 42 16.5 L47.9 17.5 V19.8 H34.2Z" fill="#3a6a5a"/>
<defs><linearGradient id="gSky2" x1="0" y1="0" x2="0" y2="1"><stop offset="0" stop-color="#5a88c8"/><stop offset="1" stop-color="#d0ecf4"/></linearGradient></defs>
</svg>
</body></html>
